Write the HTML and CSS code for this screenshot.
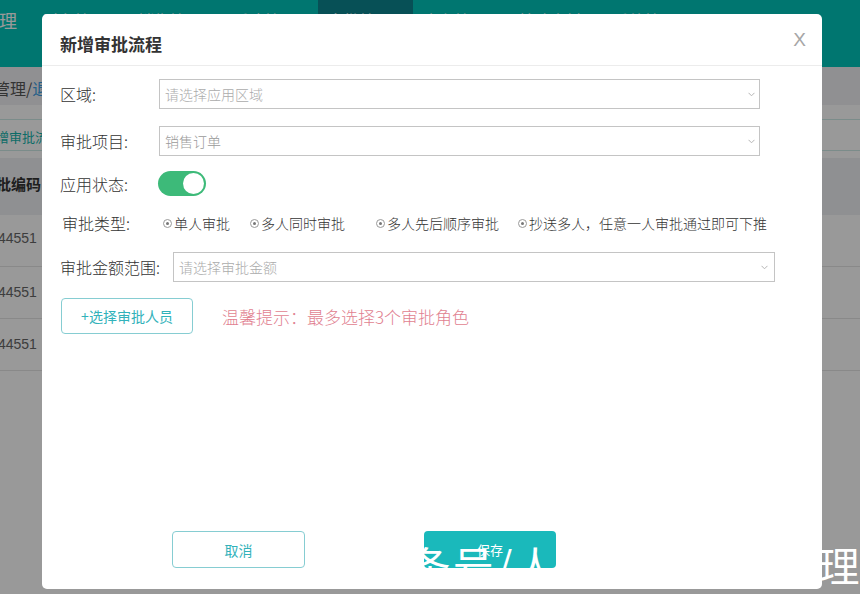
FILE: index.html
```html
<!DOCTYPE html>
<html lang="zh-CN">
<head>
<meta charset="utf-8">
<title>新增审批流程</title>
<link rel="stylesheet" href="styles.css">
</head>
<body>
<div class="page">
  <header class="topnav">
    <div class="logo">管理</div>
    <nav class="menu">
      <span class="menu-item">财务管理 ▾</span>
      <span class="menu-item">销售管理 ▾</span>
      <span class="menu-item">采购管理 ▾</span>
      <span class="menu-item active">审批管理 ▾</span>
      <span class="menu-item">库存管理 ▾</span>
      <span class="menu-item">基础资料 ▾</span>
      <span class="menu-item">系统管理 ▾</span>
    </nav>
  </header>
  <div class="crumb"><span class="crumb-inner">审批管理/<span class="crumb-link">退货审批</span></span></div>
  <div class="tabs"><span class="tab">新增审批流程</span></div>
  <div class="table">
    <div class="thead"><span class="th">审批编码</span></div>
    <div class="trow"><span class="td">2018044551</span></div>
    <div class="trow"><span class="td">2018044551</span></div>
    <div class="trow"><span class="td">2018044551</span></div>
  </div>
</div>

<div class="mask"></div>

<div class="modal">
  <div class="modal-head">
    <h2 class="modal-title">新增审批流程</h2>
    <span class="modal-close">X</span>
  </div>
  <div class="modal-body">
    <div class="row r1">
      <label class="lbl">区域:</label>
      <div class="select">
        <span class="placeholder">请选择应用区域</span>
        <svg class="chev" width="7" height="5" viewBox="0 0 7 5"><polyline points="0.5,0.8 3.5,3.8 6.5,0.8" fill="none" stroke="#b5b5b5" stroke-width="1"/></svg>
      </div>
    </div>
    <div class="row r2">
      <label class="lbl">审批项目:</label>
      <div class="select">
        <span class="value">销售订单</span>
        <svg class="chev" width="7" height="5" viewBox="0 0 7 5"><polyline points="0.5,0.8 3.5,3.8 6.5,0.8" fill="none" stroke="#b5b5b5" stroke-width="1"/></svg>
      </div>
    </div>
    <div class="row r3">
      <label class="lbl lbl-toggle">应用状态:</label>
      <span class="toggle"><span class="knob"></span></span>
    </div>
    <div class="row r4">
      <label class="lbl lbl-type">审批类型:</label>
      <div class="radios">
        <span class="radio"><i class="dot"></i>单人审批</span>
        <span class="radio"><i class="dot"></i>多人同时审批</span>
        <span class="radio wide"><i class="dot"></i>多人先后顺序审批</span>
        <span class="radio"><i class="dot"></i>抄送多人，任意一人审批通过即可下推</span>
      </div>
    </div>
    <div class="row r5">
      <label class="lbl lbl-amount">审批金额范围:</label>
      <div class="select select-wide">
        <span class="placeholder">请选择审批金额</span>
        <svg class="chev" width="7" height="5" viewBox="0 0 7 5"><polyline points="0.5,0.8 3.5,3.8 6.5,0.8" fill="none" stroke="#b5b5b5" stroke-width="1"/></svg>
      </div>
    </div>
    <div class="row r6">
      <button class="btn-outline btn-pick">+选择审批人员</button>
      <span class="hint">温馨提示：最多选择3个审批角色</span>
    </div>
  </div>
  <div class="modal-foot">
    <button class="btn-outline btn-cancel">取消</button>
    <button class="btn-save">保存</button>
  </div>
</div>

<div class="watermark">头条号/人人都是产品经理</div>
</body>
</html>
```

FILE: styles.css
```css
* { box-sizing: border-box; }
html, body { margin: 0; padding: 0; }
body {
  width: 860px;
  height: 594px;
  overflow: hidden;
  position: relative;
  background: #fff;
  font-family: "Noto Sans CJK SC", "Noto Sans", sans-serif;
  color: #333;
}

/* ---------- background page ---------- */
.page { width: 860px; overflow: hidden; }
.topnav { height: 67px; background: #00c5bb; display: flex; }
.logo {
  margin-left: -19px;
  width: 52px;
  flex: none;
  font-size: 18px;
  line-height: 20px;
  padding-top: 10px;
  color: #fff;
  white-space: nowrap;
}
.menu { display: flex; }
.menu-item {
  width: 95px;
  height: 67px;
  padding-top: 10px;
  text-align: center;
  font-size: 16px;
  line-height: 20px;
  color: #fff;
  white-space: nowrap;
}
.menu-item.active { background: #0d858f; }

.crumb {
  height: 38px;
  padding-top: 2px;
  background: #f1f1f3;
  font-size: 16px;
  line-height: 38px;
  color: #555;
  white-space: nowrap;
}
.crumb-inner { margin-left: -38px; }
.crumb-link { color: #3d9fe4; }

.tabs { height: 53px; padding-top: 14px; white-space: nowrap; }
.tab {
  display: block;
  height: 32px;
  margin-left: -17px;
  padding-top: 4px;
  font-size: 13px;
  line-height: 26px;
  color: #16b5ad;
  border-top: 1px solid #cde9e7;
  border-bottom: 1px solid #cde9e7;
}

.thead {
  height: 57px;
  background: #eef0f3;
  font-size: 15px;
  font-weight: bold;
  line-height: 52px;
  color: #333;
  white-space: nowrap;
}
.th { display: inline-block; margin-left: -19px; }
.trow {
  height: 52px;
  border-bottom: 1px solid #e4e4e4;
  font-family: "Liberation Sans", Arial, sans-serif;
  font-size: 14px;
  line-height: 46px;
  color: #666;
  white-space: nowrap;
}
.trow + .trow { line-height: 50px; }
.td { display: inline-block; margin-left: -41px; }

.mask {
  position: absolute;
  inset: 0;
  background: rgba(0, 0, 0, 0.4);
}

/* ---------- modal ---------- */
.modal {
  position: absolute;
  left: 42px;
  top: 14px;
  width: 780px;
  height: 575px;
  background: #fff;
  border-radius: 5px;
  display: flex;
  flex-direction: column;
}
.modal-head {
  height: 52px;
  flex: none;
  display: flex;
  justify-content: space-between;
  align-items: flex-start;
  padding: 19px 16px 0 18px;
  border-bottom: 1px solid #ececec;
}
.modal-title {
  margin: 0;
  font-size: 17px;
  line-height: 22px;
  font-weight: bold;
  color: #333;
}
.modal-close {
  margin-top: -4px;
  font-family: "Liberation Sans", Arial, sans-serif;
  font-size: 19px;
  line-height: 22px;
  color: #a6a6a6;
}

.modal-body { padding-left: 18px; }
.row { display: flex; align-items: center; }
.r1 { margin-top: 13px; height: 30px; }
.r2 { margin-top: 17px; height: 30px; }
.r3 { margin-top: 15px; height: 25px; }
.r4 { margin-top: 14px; height: 26px; }
.r5 { margin-top: 16px; height: 30px; }
.r6 { margin-top: 16px; height: 36px; }

.lbl {
  flex: none;
  width: 99px;
  font-size: 16px;
  line-height: 22px;
  font-weight: 300;
  color: #333;
}
.lbl-toggle { width: 98px; }
.lbl-type { width: 100px; padding-left: 2px; }
.lbl-amount { width: 113px; }

.select {
  width: 601px;
  height: 30px;
  border: 1px solid #c4c4c4;
  display: flex;
  align-items: center;
  justify-content: space-between;
  padding: 0 4px 0 5px;
  font-size: 14px;
  font-weight: 300;
}
.select-wide { width: 602px; padding-right: 6px; }
.placeholder { color: #ababab; }
.value { color: #9a9a9a; }
.chev { display: block; }

.toggle {
  width: 48px;
  height: 25px;
  border-radius: 13px;
  background: #3dba79;
  display: flex;
  align-items: center;
  justify-content: flex-end;
  padding-right: 2px;
}
.knob {
  width: 21px;
  height: 21px;
  border-radius: 50%;
  background: #fff;
}

.radios { display: flex; align-items: center; padding-left: 3px; }
.radio {
  display: flex;
  align-items: center;
  font-size: 14px;
  line-height: 20px;
  font-weight: 300;
  color: #333;
  white-space: nowrap;
}
.radio + .radio { margin-left: 20px; }
.radio.wide { margin-left: 31px; }
.radio + .radio:last-child { margin-left: 19px; }
.dot {
  width: 9px;
  height: 9px;
  border: 1px solid #9a9a9a;
  border-radius: 50%;
  margin-right: 2px;
  display: flex;
  align-items: center;
  justify-content: center;
}
.dot::after {
  content: "";
  width: 3px;
  height: 3px;
  border-radius: 50%;
  background: #777;
}

.btn-outline {
  background: #fff;
  border: 1px solid #86cdd2;
  border-radius: 4px;
  color: #32b2ba;
  font-family: inherit;
  font-size: 14px;
  padding: 0;
}
.btn-pick { width: 132px; height: 36px; margin-left: 1px; }
.hint {
  margin-left: 29px;
  font-size: 17px;
  font-weight: 300;
  color: #e17f90;
  white-space: nowrap;
}

.modal-foot {
  margin-top: auto;
  display: flex;
  gap: 119px;
  padding: 0 0 21px 130px;
}
.btn-cancel { width: 133px; height: 37px; }
.btn-save {
  width: 132px;
  height: 37px;
  border: none;
  border-radius: 4px;
  background: #1ab9bb;
  color: #fff;
  font-family: inherit;
  font-size: 13px;
  padding: 0;
}

.watermark {
  position: absolute;
  left: 366px;
  top: 543px;
  font-size: 41px;
  line-height: 42px;
  letter-spacing: 2.4px;
  color: #fff;
  white-space: nowrap;
}
```
